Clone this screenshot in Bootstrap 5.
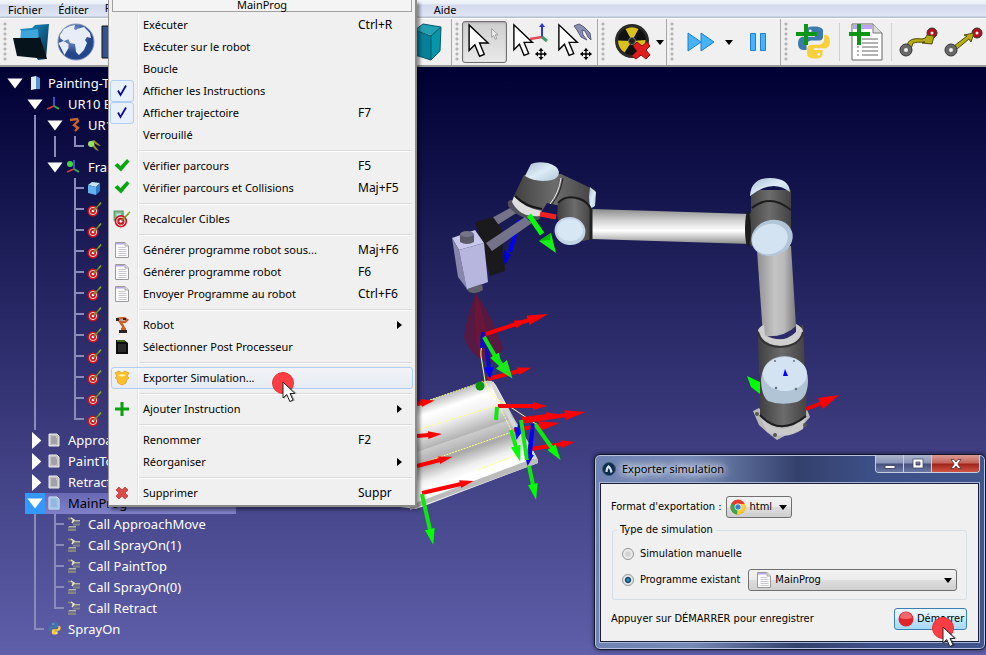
<!DOCTYPE html>
<html lang="fr">
<head>
<meta charset="utf-8">
<meta name="viewport" content="width=device-width, initial-scale=1">
<title>Exporter simulation</title>
<link href="https://cdn.jsdelivr.net/npm/bootstrap@5.3.0/dist/css/bootstrap.min.css" rel="stylesheet">
<style>
body{font-family:"Noto Sans","Open Sans",sans-serif;font-size:11px;line-height:16px;color:#000;background:#5c5ca6;overflow:hidden}
button{color:inherit}
.menubar{height:18px;background:linear-gradient(#f3f6fb 0,#e9eef8 4px,#d4daec 5px,#dfe5f4 16px,#b8bfd0 17px)}
.menubar button,.tool,.ctx-item,.wbtn{background:none;border:0;padding:0}
.menubar button{padding:0 8px;line-height:15px}
.prog-slot{width:329px}
.tools{height:49px;background:#f0f0f0;border-top:1px solid #fff;border-bottom:2px solid #9a9a96}
.tools>*{flex:none}
.tgroup{border-right:1px solid #a8a8a8}
.grip{width:10px;height:40px;flex:none;background:radial-gradient(circle at 2px 2px,#b4b4b4 1px,transparent 2px) 3px 0/5px 5px repeat-y}
.tool{width:45px;height:42px;flex:none}
.tool.wide{width:58px;padding-left:4px}
.tool.on{border:1px solid #6e6e6e;border-radius:3px;background:linear-gradient(#cfcfcf,#e8e8e8);box-shadow:inset 0 1px 2px #8888}
.first-tools{width:452px}
.first-tools .grip{width:8px}
.tsep{width:1px;height:38px;margin:0 3px;background:#d0d0d0}
.stage{background:linear-gradient(#000034,#5f5faa)}
.scene{left:0;top:0}
.tree{width:236px;padding:6px 0 10px 5px;font-size:13px;line-height:21px;color:#fff}
.trow{height:21px;white-space:nowrap}
.cell{width:20px;height:21px;flex:none}
.cell svg{display:block;margin:2px auto 0 1px}
.gv,.gt{background:linear-gradient(#8b8bbb,#8b8bbb) 9px 0/2px 21px no-repeat}
.gt{background:linear-gradient(#8b8bbb,#8b8bbb) 9px 0/2px 21px no-repeat,linear-gradient(#8b8bbb,#8b8bbb) 9px 9px/10px 2px no-repeat}
.ge{background:linear-gradient(#8b8bbb,#8b8bbb) 9px 0/2px 11px no-repeat,linear-gradient(#8b8bbb,#8b8bbb) 9px 9px/10px 2px no-repeat}
.dn,.rt{background:#fff;clip-path:polygon(12% 26%,88% 26%,50% 74%)}
.rt{clip-path:polygon(35% 10%,82% 50%,35% 90%)}
.tlabel{padding-left:3px}
.trow.sel .hot{background:#39f}
.trow.sel .fill{background:linear-gradient(#6868b4,#8080c8);color:#000}
.ctx{left:108px;top:0;width:309px;z-index:5;background:#f0f0f0;border:1px solid #979797;border-top:0;border-right:2px solid #8a8a8a;border-bottom:2px solid #8a8a8a;padding:0 2px 1px;box-shadow:3px 3px 3px #0006}
.ctx-title{height:12px;margin:0 1px 2px;border:1px solid #a0a0a0;border-top:0;line-height:10px;background:#f4f4f4}
.ctx-list{background:linear-gradient(90deg,#e2e3e3 50%,#fff 50%) 26px 0/2px 100% no-repeat}
.ctx-item{height:22px;width:100%;line-height:20px;border:1px solid transparent;border-radius:3px}
.ctx-item.hot{border-color:#aecff7;background:linear-gradient(#f2f5fa8a,#dfe9f68a)}
.ico{width:24px;flex:none;margin-left:-2px}
.ico svg,.tool svg,.wbtn svg{display:block;margin:auto}
.ico.chk{height:22px;background:#e8f0fb;border:1px solid #b0cdf4;border-radius:3px}
.ico.chk svg{margin-top:2px}
.txt{padding-left:9px}
.key{width:54px;flex:none;font-size:12px}
.sub{width:0;height:0;border:4px solid transparent;border-left:5px solid #000;border-right:0;margin-right:10px}
.ctx-sep{height:2px;margin:4px 1px 3px 28px;border-top:1px solid #dadada;border-bottom:1px solid #fff}
.pointer{pointer-events:none}
.p-menu{left:270px;top:371px;z-index:8}
.p-dlg{right:25px;bottom:-1px;z-index:8}
.win{right:0;bottom:5px;width:392px;z-index:4;border:1px solid #15152c;border-radius:6px;background:linear-gradient(90deg,#6f83b2 0,#7589b5 25%,#33406c 52%,#3c4f86 70%,#41558d 100%);box-shadow:inset 0 0 0 1px #b8c4e0,0 0 4px #0009;padding:0 6px 7px 5px}
.wtitle{height:28px}
.wtitle .cap-t{text-shadow:0 0 6px #fff,0 0 10px #fff,0 0 12px #fff}
.wtitle .logo{margin:0 6px 0 2px}
.wbtns{border:1px solid #c5cfe4;border-top:0;border-radius:0 0 4px 4px;margin-right:-1px;overflow:hidden;align-self:flex-start}
.wbtn{width:28px;height:17px;background:linear-gradient(#a9b3cd 0,#8995b6 48%,#45517b 52%,#6a78a3);border-right:1px solid #c5cfe4}
.wbtn.close-w{width:47px;border:0;background:linear-gradient(#d99a92 0,#c5655a 48%,#a02318 52%,#cf5545)}
.wbody{background:#f0f0f0;border:1px solid #1b1f3a;outline:1px solid #aab6d6;padding:12px 11px 11px 10px;font-family:"DejaVu Sans Condensed","Noto Sans",sans-serif;font-size:11px;line-height:14px}
.combo{height:22px;border:1px solid #707070;border-radius:3px;background:linear-gradient(#f2f2f2 0,#ebebeb 48%,#dddddd 52%,#cfcfcf);padding:0 3px}
.combo select{appearance:none;border:0;background:none;padding:0 14px 0 3px;font:inherit;color:#000;outline:0;flex:1;min-width:0}
.combo .car,.car{width:0;height:0;border:4px solid transparent;border-top:5px solid #000;border-bottom:0;flex:none}
.combo .car{margin-left:-13px;margin-right:1px;pointer-events:none}
.fmt{width:66px}
.fmt-l{margin-right:5px}
.box{border:1px solid #d5dfe5;border-radius:3px;padding:2px 9px 8px;margin:5px 0 0 1px}
.box legend{font-size:11px;line-height:14px;margin:0;padding:0 3px;float:none;width:auto;margin-left:-5px}
.rad{appearance:none;width:12px;height:12px;border:1px solid #8e8f8f;border-radius:50%;margin:0 6px 0 0;background:radial-gradient(#d0d0d0 20%,#f4f4f4 70%)}
.rad:checked{background:radial-gradient(circle,#3fa9d8 0,#12415f 38%,#e8eef2 52%)}
.go{height:22px;width:73px;border:1px solid #3c7fb1;border-radius:3px;background:linear-gradient(#eaf6fd 0,#d9f0fc 48%,#bee6fd 52%,#a7d9f5);padding:0 3px;font:inherit;gap:3px}
</style>
</head>
<body>
<svg width="0" height="0" class="position-absolute" aria-hidden="true"><defs>
<symbol id="tgt" viewBox="0 0 16 16"><circle cx="7" cy="10" r="5.500" fill="#c8141c"/><circle cx="7" cy="10" r="3.600" fill="none" stroke="#fff" stroke-width=".8"/><circle cx="7" cy="10" r="1.300" fill="#fff"/><path d="M7.500 9.500 14 3" stroke="#74971d" stroke-width="1.300"/><path d="m12.500 3.500 2-2.500 1 1-2 2.500z" fill="#8fb020"/></symbol>
<symbol id="doc" viewBox="0 0 16 16"><path d="M1.500.5h9.500l3.500 3.500v11.500h-13z" fill="#fcfcfc" stroke="#9a9a9a"/><path d="M2 1h8.500v1.500H2z" fill="#b9a4f4"/><path d="M11 .5v3.500h3.500" fill="#ddd" stroke="#aaa"/><path d="M4.500 5.500h7M4.500 7.500h8M4.500 9.500h8M4.500 11.500h8M4.500 13.500h8" stroke="#c9c9cd"/></symbol>
<symbol id="pdoc" viewBox="0 0 16 16"><path d="M3 2h8l2 2v10H3z" fill="#c4c4c4" stroke="#eee" /><path d="M5 5h5M5 7h6M5 9h6M5 11h6" stroke="#808080"/></symbol>
<symbol id="call" viewBox="0 0 16 16"><path d="M2 2.500h4M6 5.500h8M7 8.500h7M2 11.500h8M2 14h8" stroke="#83867f" stroke-width="2"/><path d="M6 4.500h8M3 10.500h7" stroke="#b4b8b0"/><path d="m5 2 3 2-2 3" fill="none" stroke="#ece7c0" stroke-width="1.400"/></symbol>
<symbol id="py" viewBox="0 0 32 32"><path d="M16 1c-6 0-7 2-7 4v4h8v1.500H6c-3 0-5 2.500-5 6.500s2 6 4.500 6H9v-4c0-3 2-5 5-5h7c2 0 3.500-1.500 3.500-3.500V5c0-2.500-3-4-8.500-4z" fill="#3c79ad"/><path d="M17 31c6 0 7-2 7-4v-4h-8v-1.500h10c3 0 5-2.500 5-6.500s-2-6-4-6h-1.500v4c0 3-2 5-5 5h-7c-2 0-4 1.500-4 3.500V27c0 2.500 2.500 4 7.500 4z" fill="#f9cf3c"/><circle cx="12.500" cy="5" r="1.300" fill="#fff"/><circle cx="20.500" cy="27" r="1.300" fill="#fff"/></symbol>
<symbol id="rob" viewBox="0 0 16 16"><path d="m3 2 7-1 3 2-2 2-5-.5L9 9l1 3M7 12h5" fill="none" stroke="#c8622e" stroke-width="2.600"/><path d="M5 13h8v3H5zM2 1h3v3H2zM9 1h3v2H9z" fill="#33231e"/></symbol>
<symbol id="trob" viewBox="0 0 16 16"><path d="m4 3 7-1 1 2-4 4 4 3-3 3" fill="none" stroke="#c8622e" stroke-width="2.400"/></symbol>
<symbol id="axes" viewBox="0 0 16 16"><path d="M8 11V1" stroke="#5060f0" stroke-width="1.600"/><path d="m8 10-7 3" stroke="#e0303c" stroke-width="1.800"/><path d="m8 10 5 3" stroke="#2fae5e" stroke-width="2"/></symbol>
<symbol id="ok" viewBox="0 0 16 16"><path d="m.5 7.500 3-2.500L6.500 8 13 1l2.500 2.500L7 13.500z" fill="#0aa514"/></symbol>
<symbol id="tick" viewBox="0 0 16 16"><path d="M4 7.500 6.500 12 12 2.500" fill="none" stroke="#0a0a9c" stroke-width="1.800"/></symbol>
<symbol id="cur" viewBox="0 0 28 40"><path d="M2 2v27l6-6 5 12 5-2-5-12h9z" fill="#fff" stroke="#000" stroke-width="1.500"/></symbol>
<symbol id="mv" viewBox="0 0 14 14"><path d="M7 1v12M1 7h12" stroke="#000" stroke-width="1.600"/><path d="m7 0 3 3.500H4zM7 14l-3-3.500h6zM0 7l3.500-3v6zM14 7l-3.500 3V4z"/></symbol>
<symbol id="ptr" viewBox="0 0 30 34"><circle cx="13" cy="12" r="10.500" fill="#ff3d45" stroke="#e03038"/><path d="M14 12v16l4-4 3 7 4-1.500-3.500-7H27z" fill="#0005"/><path d="M13 11v16l3.800-3.500 3 7 3.200-1.500-3-6.500h5z" fill="#fff" stroke="#222"/></symbol>
</defs></svg>
<div class="d-flex flex-column vh-100">
<nav class="menubar d-flex" aria-label="Menu principal">
<button type="button">Fichier</button><button type="button">Éditer</button><div class="prog-slot"><button type="button">Programme</button></div><button type="button">Aide</button>
</nav>
<div class="tools d-flex align-items-stretch" role="toolbar">
<div class="tgroup first-tools d-flex align-items-center"><span class="grip"></span>
<button class="tool" type="button" aria-label="Ouvrir"><svg width="38" height="38" viewBox="0 0 38 38"><defs><linearGradient id="fo" x1="0" y1="0" x2="1" y2="1"><stop stop-color="#1d9fe0"/><stop offset="1" stop-color="#04283f"/></linearGradient></defs><path d="m8 6 12-1 3-3 14-1-3 35-8 1z" fill="url(#fo)"/><path d="m9 8 17-2 1 12H8z" fill="#3ea4dc"/><path d="m1 15 24 0 3-1 7 22-30-3z" fill="#07131b"/></svg></button>
<button class="tool" type="button" aria-label="Bibliothèque"><svg width="38" height="38" viewBox="0 0 38 38"><defs><radialGradient id="gl" cx=".4" cy=".3"><stop stop-color="#94b0e0"/><stop offset="1" stop-color="#22458b"/></radialGradient></defs><circle cx="19" cy="19" r="18" fill="url(#gl)" stroke="#8195bb"/><path d="m3 12 4-6 6-3 5-1-1 4 3 2-5 3-3 5-5 2-4-3zM1.500 20l5-2 5 3 0 4-4 7zM20 6l7-2 6 6 1 5-4-1-2 3 2 3-3 7-5 5-3-3-1-8-5-1-2-5 3-4 4-2z" fill="#e6edf8"/></svg></button>
<button class="tool" type="button" aria-label="Enregistrer"><svg width="40" height="34"><path d="M1 1h38v32H1z" fill="#35518f" stroke="#111"/></svg></button>
<button class="tool ms-auto" type="button" aria-label="Vue isométrique"><svg width="36" height="38" viewBox="0 0 36 38"><path d="m4 7 8-6 18 3-8 9z" fill="#24a0b4"/><path d="M4 7l16 6v24L4 32z" fill="#058098"/><path d="m20 13 10-9-1 24-9 9z" fill="#0596a9"/><path d="m4 7 16 6 10-9M20 13v24M4 7l8-6 18 3-1 24-9 9-16-5z" fill="none" stroke="#05586c"/></svg></button></div>
<div class="tgroup d-flex align-items-center"><span class="grip"></span>
<button class="tool on" type="button" aria-label="Sélection"><svg width="36" height="38" viewBox="0 0 36 38"><use href="#cur" width="27" height="38"/><g opacity=".55"><use href="#cur" x="24" y="5" width="9" height="13"/></g></svg></button>
<button class="tool" type="button" aria-label="Déplacer repère"><svg width="36" height="38" viewBox="0 0 36 38"><path d="M30 14V2" stroke="#2638dc" stroke-width="2"/><path d="m27 4 3-4 3 4z" fill="#2638dc"/><path d="m30 14-12 2" stroke="#e24a58" stroke-width="2.500"/><path d="m30 14 5 4" stroke="#3a9c6c" stroke-width="3"/><use href="#cur" width="26" height="37"/><use href="#mv" x="23" y="25" width="12" height="12"/></svg></button>
<button class="tool" type="button" aria-label="Déplacer outil"><svg width="36" height="38" viewBox="0 0 36 38"><path d="m17 3 5-2 5 3 6 6 1 7-3-3-3-6-3-1 1 5 4 5-6-3-4-7z" fill="#8a8fb4" stroke="#54587a"/><use href="#cur" width="26" height="37"/><use href="#mv" x="23" y="25" width="12" height="12"/></svg></button></div>
<div class="tgroup d-flex align-items-center"><span class="grip"></span>
<button class="tool wide d-flex align-items-center" type="button" aria-label="Collisions"><svg width="38" height="38" viewBox="0 0 38 38"><circle cx="18" cy="18" r="17" fill="#2b2b2b"/><circle cx="18" cy="18" r="14" fill="#111"/><path d="m18 18-6.500-12a14 14 0 0 1 13 0zM18 18l13.500-1a14 14 0 0 1-6 12zM18 18 10.500 29.500a14 14 0 0 1-6.500-12z" fill="#d9c01e"/><circle cx="18" cy="18" r="3.500" fill="#222" stroke="#777"/><path d="m19 23 4-4 5 4 5-4 3 4-4 4 4 5-4 4-5-4-5 4-4-3 5-5z" fill="#de1d1d" stroke="#8f0d0d"/></svg><span class="car mx-auto"></span></button></div>
<div class="tgroup d-flex align-items-center"><span class="grip"></span>
<button class="tool wide d-flex align-items-center" type="button" aria-label="Vitesse rapide"><svg width="36" height="24" viewBox="0 0 36 24"><path d="M4 3v18l13-9zM17 3v18l13-9z" fill="#45b4fb" stroke="#2080cc"/></svg><span class="car mx-auto"></span></button>
<button class="tool" type="button" aria-label="Pause"><svg width="18" height="20"><path d="M1.500 1.500h5v17h-5zM11.500 1.500h5v17h-5z" fill="#45b4fb" stroke="#2080cc"/></svg></button></div>
<div class="d-flex align-items-center"><span class="grip"></span>
<button class="tool" type="button" aria-label="Ajouter script Python"><svg width="36" height="38" viewBox="0 0 36 38"><use href="#py" x="1" y="2" width="34" height="35"/><path d="M8 1h4v8h9v4h-9v9H8v-9H0V9h8z" fill="#0d9614"/></svg></button><span class="tsep"></span>
<button class="tool" type="button" aria-label="Ajouter programme"><svg width="36" height="38" viewBox="0 0 36 38"><path d="M4 1h21l9 9v27H4z" fill="#fff" stroke="#666"/><path d="M5 2h19v4H5z" fill="#bda4fa"/><path d="M25 1v9h9" fill="#ddd" stroke="#777"/><path d="M9 16h2M14 16h16M9 20h2M14 20h16M9 24h2M14 24h16M9 28h2M14 28h16M9 32h2M14 32h16" stroke="#999" stroke-width="1.500"/><path d="M9 1h4v8h9v4h-9v9H9v-9H1V9h8z" fill="#0d9614"/></svg></button><span class="tsep"></span>
<button class="tool" type="button" aria-label="Mouvement articulaire"><svg width="40" height="30" viewBox="0 0 40 30"><circle cx="34" cy="6" r="5" fill="#b60f1c" stroke="#333"/><circle cx="34" cy="6" r="1.500" fill="#fff"/><path d="M9 18q2-8 15-6 4 0 5-4l7 1-2 8-10-1 3-1q-9 0-12 1-1 3-2 6z" fill="#b5ac15" stroke="#514d08"/><circle cx="8" cy="23" r="6" fill="#686868" stroke="#333"/><circle cx="8" cy="23" r="2" fill="#eee"/></svg></button>
<button class="tool" type="button" aria-label="Mouvement linéaire"><svg width="40" height="30" viewBox="0 0 40 30"><circle cx="34" cy="6" r="5" fill="#b60f1c" stroke="#333"/><circle cx="34" cy="6" r="1.500" fill="#fff"/><path d="m11 19 13-10-3-1 10-2-3 9-2-3-12 10z" fill="#b5ac15" stroke="#514d08"/><circle cx="8" cy="23" r="6" fill="#686868" stroke="#333"/><circle cx="8" cy="23" r="2" fill="#eee"/></svg></button></div>
</div>
<main class="stage position-relative flex-grow-1 overflow-hidden">
<svg class="scene position-absolute w-100 h-100" viewBox="0 67 986 588" preserveAspectRatio="xMaxYMin slice" role="img" aria-label="Robot UR10">
<defs>
<linearGradient id="tube" x1="0" y1="0" x2="0" y2="1"><stop stop-color="#8c8c8c"/><stop offset=".35" stop-color="#d6d6d6"/><stop offset=".62" stop-color="#fff"/><stop offset=".85" stop-color="#bbb"/><stop offset="1" stop-color="#8b8b8b"/></linearGradient>
<linearGradient id="arm" x1="0" x2="1"><stop stop-color="#909090"/><stop offset=".45" stop-color="#c4c4c4"/><stop offset=".7" stop-color="#b9b9b9"/><stop offset="1" stop-color="#7a7a7a"/></linearGradient>
<linearGradient id="drk" x1="0" x2="1"><stop stop-color="#404040"/><stop offset=".5" stop-color="#6c6c6c"/><stop offset="1" stop-color="#424242"/></linearGradient>
<linearGradient id="cap" x1="0" y1="0" x2="1" y2="1"><stop stop-color="#a9bdcf"/><stop offset=".5" stop-color="#dcebf7"/><stop offset="1" stop-color="#b5c9db"/></linearGradient>
<linearGradient id="part" gradientUnits="userSpaceOnUse" x1="417" y1="404" x2="449" y2="496"><stop stop-color="#bbb"/><stop offset=".13" stop-color="#fff"/><stop offset=".26" stop-color="#f2f2f2"/><stop offset=".46" stop-color="#b4b4b4"/><stop offset=".47" stop-color="#cbcbcb"/><stop offset=".62" stop-color="#a9a9a9"/><stop offset=".77" stop-color="#eee"/><stop offset=".86" stop-color="#fff"/><stop offset="1" stop-color="#fff"/></linearGradient>
<marker id="hr" markerUnits="userSpaceOnUse" markerWidth="16" markerHeight="10" refX="1" refY="4" orient="auto"><path d="m0 0 14 4L0 8z" fill="red"/></marker>
<marker id="hR" markerUnits="userSpaceOnUse" markerWidth="22" markerHeight="12" refX="1" refY="5" orient="auto"><path d="m0 0 21 5L0 10z" fill="red"/></marker>
<marker id="hg" markerUnits="userSpaceOnUse" markerWidth="18" markerHeight="12" refX="1" refY="5" orient="auto"><path d="m0 0 16 5L0 10z" fill="#0f0"/></marker>
<marker id="hG" markerUnits="userSpaceOnUse" markerWidth="20" markerHeight="16" refX="1" refY="7" orient="auto"><path d="m0 0 18 7L0 14z" fill="#1fe81a"/></marker>
<marker id="hb" markerUnits="userSpaceOnUse" markerWidth="14" markerHeight="12" refX="1" refY="5" orient="auto"><path d="m0 0 12 5L0 10z" fill="#00f"/></marker>
</defs>
<!-- painted part -->
<path d="m400 410 86-29q7-3 12 8l17 31q16 26 22 38l1 5-122 46-16-2z" fill="url(#part)"/>
<path d="m410 505 127-48 1 6-128 47z" fill="#bcbcbc"/>
<path d="m493 381 20 38 25 41-8-3-20-35-18-35z" fill="#d7d7d7"/>
<!-- gripper and spray gun -->
<path d="m490 219 20-11 8 4-24 15z" fill="#74738a"/>
<ellipse cx="524" cy="210" rx="18" ry="7" transform="rotate(27 524 210)" fill="#50505e"/>
<path d="m519 220-9 32" stroke="#00f" stroke-width="4"/><path d="m504 250 7 5-6 10-2-6z" fill="#0000d0"/>
<path d="m475 222 18-5 8 11 4 43-15 5-8-30z" fill="#1a1a1c"/>
<path d="m486 243 39-26 7 6-40 28z" fill="#74738a"/>
<path d="m452 238 23-8 9 13-25 7z" fill="#c8c8ec"/><path d="m452 238 7 12 8 39-9-12z" fill="#8787ac"/><path d="m459 250 25-7 4 39-21 8z" fill="#b6b6de"/>
<path d="M460 234v8q7 4 14 0v-8z" fill="#5a5a68"/><ellipse cx="467" cy="234" rx="7" ry="3" fill="#74748a"/>
<path d="m467 289 15-5 1 6q-7 5-14 2z" fill="#60606e"/>
<path d="M476 293q-9 22-12 43 4 19 26 27 10-6 13-15-8-27-27-55z" fill="#6a1230" opacity=".68"/><path d="M476 293q-3 30 2 62l12 7q-2-36-14-69z" fill="#7d1430" opacity=".5"/>
<!-- wrist -->
<path d="m514 196 28 14-2 6q-20 2-28-14z" fill="#dedede"/>
<path d="m524 175-10 21q10 12 28 15l5-8 14 3 30 4 4-20-34-16z" fill="url(#drk)"/>
<path d="m515 196q11 11 27 13" stroke="#161616" stroke-width="2" fill="none"/>
<path d="M561 178q-2 15-11 26" stroke="#eee" fill="none"/><path d="m563 178q-2 15-11 26" stroke="#222" fill="none"/>
<path d="m590 187 6 5-1 14-5 3-1-12z" fill="url(#cap)"/>
<path d="m525 176 6-12q6-3 17-1 10 3 11 9 0 6-7 8-16 3-27-4z" fill="url(#cap)"/>
<path d="m558 204q6-8 17-6 12 1 16 10l1 31-9 2q-22-10-26-25z" fill="url(#drk)"/><path d="M558 203q8-9 22-4 8 3 11 10" stroke="#1b1b1b" stroke-width="2" fill="none"/>
<path d="m540 214 16 3" stroke="#e22" stroke-width="5"/>
<ellipse cx="570" cy="231" rx="15.500" ry="14" transform="rotate(12 570 231)" fill="#c2d5e6"/><ellipse cx="570" cy="230" rx="13" ry="11" fill="#d8e7f4"/>
<path d="m529 215 13 19" stroke="#0f0" stroke-width="5"/><path d="m539 241 12-8 5 20z" fill="#15f315"/><path d="m539 241 12-8-1 7z" fill="#0b0"/>
<!-- forearm and upper arm -->
<path d="m592 209 158 5v30l-158-5z" fill="url(#tube)"/><path d="M591 209v31" stroke="#222" stroke-width="3"/>
<path d="m757 250 34-4 5 80q-12 12-33 10z" fill="url(#arm)"/>
<path d="M758 330q24 22 45-6l2 50h-46z" fill="url(#drk)"/>
<path d="M758 330q2-4 6-5l1 10q18 10 31-3v-8q6 3 7 7-1 15-22 15-21-2-23-16z" fill="#cfcfcf"/><path d="M758 332q4 15 22 15 20-1 23-15" stroke="#333" stroke-width="2" fill="none"/>
<path d="M751 190v22q-7 14 0 34l10 2 30-20v-38z" fill="url(#drk)"/><ellipse cx="748" cy="229" rx="3" ry="18" fill="#1d1d1d"/>
<path d="M752 208q18-15 39 2" stroke="#1d1d1d" stroke-width="2" fill="none"/>
<path d="M750 196q1-18 20-18t20 14q-18-14-40 4z" fill="url(#cap)"/>
<ellipse cx="772" cy="238" rx="21" ry="18" transform="rotate(-18 772 238)" fill="#b2c6d8"/><ellipse cx="770" cy="239" rx="18" ry="15" transform="rotate(-18 770 239)" fill="#d3e3f1"/>
<!-- base -->
<path d="m753 411 6-3 5 7h36l6-8 4 10-7 8-13 8-13 7-9-7-9-8z" fill="#b9b9b9"/><path d="M760 416q21 26 46 0l-3 13q-18 12-36 3z" fill="#c9c9c9"/>
<circle cx="757" cy="414" r="2" fill="#555"/><circle cx="775" cy="435" r="2" fill="#555"/><circle cx="805" cy="425" r="2" fill="#555"/>
<path d="M760 366v50q20 22 46 1l1-45z" fill="url(#drk)"/><path d="M760 415q20 22 46 1" stroke="#1d1d1d" stroke-width="2" fill="none"/>
<path d="M761 379q2-22 24-23 22 2 23 24 0 18-11 22-16 4-29-1-7-6-7-22z" fill="#b0c4d6"/><ellipse cx="785" cy="374" rx="22" ry="17" fill="#d3e3f1"/><g fill="#66717e"><circle cx="776" cy="388" r="1.300"/><circle cx="796" cy="389" r="1.300"/><circle cx="775" cy="361" r="1"/><circle cx="794" cy="361" r="1"/></g>
<path d="m783 376 2-7 3 7z" fill="#00f"/>
<path d="m806 409 16-6" stroke="#e00" stroke-width="4"/><path d="m818 398 21-3-16 14z" fill="red"/><path d="m747 376 13 6v12l-9-7z" fill="#0f0"/>
<!-- paint path and frames -->
<g fill="none" stroke="#ffff84"><path d="M485 336q-5 12-4 20l4 25q5 14 15 20l12 7 24 16q-5 6-16 3"/><path d="m430 400 55-19M417 430l82-25 13 27-95 33M478 470l38-15" stroke-dasharray="2 1"/></g>
<g fill="none" stroke="red" stroke-width="4"><path d="m486 334 30-10" marker-end="url(#hr)"/><path d="m516 324 13-4" marker-end="url(#hR)"/><path d="m488 379 31-8" marker-end="url(#hr)"/><path d="m498 406h36" marker-end="url(#hr)"/><path d="m417 404 5-1" marker-end="url(#hr)"/><path d="m417 436 12-1" marker-end="url(#hr)"/><path d="m417 466 23-6" marker-end="url(#hr)"/><path d="m422 493 39-9" marker-end="url(#hr)"/><path d="m520 422 46-7" marker-end="url(#hR)"/><path d="m514 430 26-4" marker-end="url(#hR)"/><path d="m522 419 25-3" marker-end="url(#hr)"/><path d="m531 449 31-5" marker-end="url(#hr)"/></g>
<g fill="none" stroke="#0b0bc8" stroke-width="4"><path d="m482 348 1-16"/><path d="m486 342 3 26" marker-end="url(#hb)"/><path d="m533 424-4 31" marker-end="url(#hb)"/><path d="m521 421-2 8" marker-end="url(#hb)"/></g>
<g fill="none" stroke="#0fe80f" stroke-width="4"><path d="m484 337 11 19" marker-end="url(#hg)"/><path d="m495 356 7 9" marker-end="url(#hG)"/><path d="m422 494 8 36" marker-end="url(#hg)"/><path d="m497 407-1 13"/><path d="m511 430 5 17" marker-end="url(#hg)"/><path d="m521 420 6 40"/><path d="m529 466 4 19" marker-end="url(#hg)"/><path d="m535 424 17 24" marker-end="url(#hg)"/></g>
<circle cx="480" cy="386" r="4.500" fill="#0b960b"/><path d="m533 424-3 35" stroke="#00f" stroke-width="3"/>
</svg>
<div class="tree position-relative">
<div class="trow d-flex"><span class="cell dn"></span><span class="cell"><svg width="16" height="16"><path d="m5 2 5-1v13l-5 1z" fill="#e3ecf3"/><path d="m10 1 4 2v11h-4z" fill="#4f94cf"/></svg></span><span class="tlabel">Painting-Tur</span></div>
<div class="trow d-flex"><span class="cell"></span><span class="cell dn"></span><span class="cell"><svg width="16" height="16"><use href="#axes"/></svg></span><span class="tlabel">UR10 B</span></div>
<div class="trow d-flex"><span class="cell"></span><span class="cell gv"></span><span class="cell dn"></span><span class="cell"><svg width="16" height="16"><use href="#trob"/></svg></span><span class="tlabel">UR10</span></div>
<div class="trow d-flex"><span class="cell"></span><span class="cell gv"></span><span class="cell gv"></span><span class="cell ge"></span><span class="cell"><svg width="16" height="16"><path d="m3 4 5-2 7 6-3-.5L8 5l1 3 4 5-3-1-5-5z" fill="#95922a"/><circle cx="5" cy="6" r="3" fill="#9be06e"/></svg></span></div>
<div class="trow d-flex"><span class="cell"></span><span class="cell gv"></span><span class="cell dn"></span><span class="cell"><svg width="16" height="16"><use href="#axes"/><circle cx="4" cy="5" r="3" fill="#46d63a"/></svg></span><span class="tlabel">Fram</span></div>
<div class="trow d-flex"><span class="cell"></span><span class="cell gv"></span><span class="cell"></span><span class="cell gt"></span><span class="cell"><svg width="16" height="16"><path d="m2 5 4-3 8 1-4 4z" fill="#c4e4fa"/><path d="m2 5 8 2v8l-8-2z" fill="#63b2ee"/><path d="m10 7 4-4v8l-4 4z" fill="#2b7cc8"/></svg></span></div>
<div class="trow d-flex"><span class="cell"></span><span class="cell gv"></span><span class="cell"></span><span class="cell gt"></span><span class="cell"><svg width="16" height="16"><use href="#tgt"/></svg></span></div>
<div class="trow d-flex"><span class="cell"></span><span class="cell gv"></span><span class="cell"></span><span class="cell gt"></span><span class="cell"><svg width="16" height="16"><use href="#tgt"/></svg></span></div>
<div class="trow d-flex"><span class="cell"></span><span class="cell gv"></span><span class="cell"></span><span class="cell gt"></span><span class="cell"><svg width="16" height="16"><use href="#tgt"/></svg></span></div>
<div class="trow d-flex"><span class="cell"></span><span class="cell gv"></span><span class="cell"></span><span class="cell gt"></span><span class="cell"><svg width="16" height="16"><use href="#tgt"/></svg></span></div>
<div class="trow d-flex"><span class="cell"></span><span class="cell gv"></span><span class="cell"></span><span class="cell gt"></span><span class="cell"><svg width="16" height="16"><use href="#tgt"/></svg></span></div>
<div class="trow d-flex"><span class="cell"></span><span class="cell gv"></span><span class="cell"></span><span class="cell gt"></span><span class="cell"><svg width="16" height="16"><use href="#tgt"/></svg></span></div>
<div class="trow d-flex"><span class="cell"></span><span class="cell gv"></span><span class="cell"></span><span class="cell gt"></span><span class="cell"><svg width="16" height="16"><use href="#tgt"/></svg></span></div>
<div class="trow d-flex"><span class="cell"></span><span class="cell gv"></span><span class="cell"></span><span class="cell gt"></span><span class="cell"><svg width="16" height="16"><use href="#tgt"/></svg></span></div>
<div class="trow d-flex"><span class="cell"></span><span class="cell gv"></span><span class="cell"></span><span class="cell gt"></span><span class="cell"><svg width="16" height="16"><use href="#tgt"/></svg></span></div>
<div class="trow d-flex"><span class="cell"></span><span class="cell gv"></span><span class="cell"></span><span class="cell gt"></span><span class="cell"><svg width="16" height="16"><use href="#tgt"/></svg></span></div>
<div class="trow d-flex"><span class="cell"></span><span class="cell gv"></span><span class="cell"></span><span class="cell ge"></span><span class="cell"><svg width="16" height="16"><use href="#tgt"/></svg></span></div>
<div class="trow d-flex"><span class="cell"></span><span class="cell rt"></span><span class="cell"><svg width="16" height="16"><use href="#pdoc"/></svg></span><span class="tlabel">Approa</span></div>
<div class="trow d-flex"><span class="cell"></span><span class="cell rt"></span><span class="cell"><svg width="16" height="16"><use href="#pdoc"/></svg></span><span class="tlabel">PaintTo</span></div>
<div class="trow d-flex"><span class="cell"></span><span class="cell rt"></span><span class="cell"><svg width="16" height="16"><use href="#pdoc"/></svg></span><span class="tlabel">Retract</span></div>
<div class="trow sel d-flex"><span class="cell"></span><span class="cell hot"><span class="cell dn d-block"></span></span><span class="fill d-flex flex-grow-1"><span class="cell"><svg width="16" height="16"><use href="#pdoc"/><path d="M3 2h8l2 2v10H3z" fill="#8ac6ff99"/></svg></span><span class="tlabel">MainProg</span></span></div>
<div class="trow d-flex"><span class="cell"></span><span class="cell gv"></span><span class="cell gt"></span><span class="cell"><svg width="16" height="16"><use href="#call"/></svg></span><span class="tlabel">Call ApproachMove</span></div>
<div class="trow d-flex"><span class="cell"></span><span class="cell gv"></span><span class="cell gt"></span><span class="cell"><svg width="16" height="16"><use href="#call"/></svg></span><span class="tlabel">Call SprayOn(1)</span></div>
<div class="trow d-flex"><span class="cell"></span><span class="cell gv"></span><span class="cell gt"></span><span class="cell"><svg width="16" height="16"><use href="#call"/></svg></span><span class="tlabel">Call PaintTop</span></div>
<div class="trow d-flex"><span class="cell"></span><span class="cell gv"></span><span class="cell gt"></span><span class="cell"><svg width="16" height="16"><use href="#call"/></svg></span><span class="tlabel">Call SprayOn(0)</span></div>
<div class="trow d-flex"><span class="cell"></span><span class="cell gv"></span><span class="cell ge"></span><span class="cell"><svg width="16" height="16"><use href="#call"/></svg></span><span class="tlabel">Call Retract</span></div>
<div class="trow d-flex"><span class="cell"></span><span class="cell ge"></span><span class="cell"><svg width="16" height="16"><use href="#py" x="2" y="1" width="13" height="13"/></svg></span><span class="tlabel">SprayOn</span></div>
</div>
</main>
</div>
<div class="ctx position-absolute" role="menu">
<div class="ctx-title text-center">MainProg</div>
<div class="ctx-list">
<button class="ctx-item d-flex align-items-center text-start" type="button"><span class="ico"></span><span class="txt flex-grow-1">Exécuter</span><span class="key">Ctrl+R</span></button>
<button class="ctx-item d-flex align-items-center text-start" type="button"><span class="ico"></span><span class="txt">Exécuter sur le robot</span></button>
<button class="ctx-item d-flex align-items-center text-start" type="button"><span class="ico"></span><span class="txt">Boucle</span></button>
<button class="ctx-item d-flex align-items-center text-start" type="button"><span class="ico chk"><svg width="16" height="16"><use href="#tick"/></svg></span><span class="txt">Afficher les Instructions</span></button>
<button class="ctx-item d-flex align-items-center text-start" type="button"><span class="ico chk"><svg width="16" height="16"><use href="#tick"/></svg></span><span class="txt flex-grow-1">Afficher trajectoire</span><span class="key">F7</span></button>
<button class="ctx-item d-flex align-items-center text-start" type="button"><span class="ico"></span><span class="txt">Verrouillé</span></button>
<div class="ctx-sep"></div>
<button class="ctx-item d-flex align-items-center text-start" type="button"><span class="ico"><svg width="16" height="16"><use href="#ok"/></svg></span><span class="txt flex-grow-1">Vérifier parcours</span><span class="key">F5</span></button>
<button class="ctx-item d-flex align-items-center text-start" type="button"><span class="ico"><svg width="16" height="16"><use href="#ok"/></svg></span><span class="txt flex-grow-1">Vérifier parcours et Collisions</span><span class="key">Maj+F5</span></button>
<div class="ctx-sep"></div>
<button class="ctx-item d-flex align-items-center text-start" type="button"><span class="ico"><svg width="18" height="18" viewBox="0 0 16 16"><path d="M1 1h8v8H1z" fill="#7ec283" stroke="#5b9a72"/><path d="M3 3h4v3H3z" fill="#b7e4e6"/><use href="#tgt"/></svg></span><span class="txt">Recalculer Cibles</span></button>
<div class="ctx-sep"></div>
<button class="ctx-item d-flex align-items-center text-start" type="button"><span class="ico"><svg width="16" height="16"><use href="#doc"/></svg></span><span class="txt flex-grow-1">Générer programme robot sous...</span><span class="key">Maj+F6</span></button>
<button class="ctx-item d-flex align-items-center text-start" type="button"><span class="ico"><svg width="16" height="16"><use href="#doc"/></svg></span><span class="txt flex-grow-1">Générer programme robot</span><span class="key">F6</span></button>
<button class="ctx-item d-flex align-items-center text-start" type="button"><span class="ico"><svg width="16" height="16"><use href="#doc"/></svg></span><span class="txt flex-grow-1">Envoyer Programme au robot</span><span class="key">Ctrl+F6</span></button>
<div class="ctx-sep"></div>
<button class="ctx-item d-flex align-items-center text-start" type="button"><span class="ico"><svg width="16" height="16"><use href="#rob"/></svg></span><span class="txt flex-grow-1">Robot</span><span class="sub"></span></button>
<button class="ctx-item d-flex align-items-center text-start" type="button"><span class="ico"><svg width="16" height="16"><path d="M2 1h8l4 3v11H2z" fill="#0d0d0d"/><path d="M3 1h7l1 2H3z" fill="#3f6b16"/><path d="M4 6h8M4 8h8M4 10h8M4 12h8" stroke="#444"/></svg></span><span class="txt">Sélectionner Post Processeur</span></button>
<div class="ctx-sep"></div>
<button class="ctx-item hot d-flex align-items-center text-start" type="button"><span class="ico"><svg width="16" height="16"><path d="m1 3 4-2 3 2 3-2 4 2-2 3 2 2-2 1-1 4-4 2-4-2-1-4-2-1 2-2z" fill="#fbc02c" stroke="#d89a14" stroke-width=".7"/><path d="m4 5 4 2 4-2-4-1z" fill="#fff3a8"/></svg></span><span class="txt">Exporter Simulation...</span></button>
<div class="ctx-sep"></div>
<button class="ctx-item d-flex align-items-center text-start" type="button"><span class="ico"><svg width="16" height="16"><path d="M6.500 1h3v5.500H15v3H9.500V15h-3V9.500H1v-3h5.500z" fill="#0ba012"/></svg></span><span class="txt flex-grow-1">Ajouter Instruction</span><span class="sub"></span></button>
<div class="ctx-sep"></div>
<button class="ctx-item d-flex align-items-center text-start" type="button"><span class="ico"></span><span class="txt flex-grow-1">Renommer</span><span class="key">F2</span></button>
<button class="ctx-item d-flex align-items-center text-start" type="button"><span class="ico"></span><span class="txt flex-grow-1">Réorganiser</span><span class="sub"></span></button>
<div class="ctx-sep"></div>
<button class="ctx-item d-flex align-items-center text-start" type="button"><span class="ico"><svg width="16" height="16"><path d="m2 5 3-3 3 3 3-3 3 3-3 3 3 3-3 3-3-3-3 3-3-3 3-3z" fill="#dc4a4a" stroke="#c03a3a" stroke-width=".8"/></svg></span><span class="txt flex-grow-1">Supprimer</span><span class="key">Suppr</span></button>
</div>
</div>
<svg class="pointer p-menu position-absolute" width="30" height="34"><use href="#ptr"/></svg>
<section class="win position-absolute" role="dialog" aria-labelledby="wt">
<div class="wtitle d-flex align-items-center"><svg width="14" height="14" class="logo"><circle cx="7" cy="7" r="6.500" fill="#0e2c4c" stroke="#3c5876"/><path d="M3.500 10q0-5 3-7 3 2 4 7l-2 1q0-3-2-5-1 2-1 4z" fill="#d8e8f2"/></svg><span id="wt" class="cap-t me-auto">Exporter simulation</span>
<div class="wbtns d-flex"><button class="wbtn" type="button" aria-label="Réduire"><svg width="12" height="12"><path d="M1 7.500h10v3H1z" fill="#fff" stroke="#444c66"/></svg></button><button class="wbtn" type="button" aria-label="Agrandir"><svg width="12" height="12"><path d="M1 1h10v9H1zM4 4v3h4V4z" fill="#fff" fill-rule="evenodd" stroke="#444c66" stroke-width=".8"/></svg></button><button class="wbtn close-w" type="button" aria-label="Fermer"><svg width="12" height="12"><path d="M1 1.500h3l2 2.500 2-2.500h3L7.800 6l3.200 4.500H8L6 8l-2 2.500H1L4.200 6z" fill="#fff" stroke="#5a2a2a" stroke-width=".8"/></svg></button></div></div>
<form class="wbody">
<div class="d-flex align-items-center"><label for="fmt" class="fmt-l">Format d'exportation :</label><div class="combo fmt d-flex align-items-center"><svg width="16" height="16"><circle cx="8" cy="8" r="7.500" fill="#e33b2e"/><path d="M8 8 1.500 4.200A7.500 7.500 0 0 0 7 15.400L11 9z" fill="#3fa64a"/><path d="M8 8 7 15.400A7.500 7.500 0 0 0 14.900 5H8z" fill="#fbcf2f"/><circle cx="8" cy="8" r="3.400" fill="#fff"/><circle cx="8" cy="8" r="2.700" fill="#3f7fdc"/></svg><select id="fmt"><option>html</option></select><span class="car"></span></div></div>
<fieldset class="box"><legend>Type de simulation</legend>
<div class="d-flex align-items-center mt-1 mb-1 py-1"><input class="rad" type="radio" name="sim" id="s1"><label for="s1">Simulation manuelle</label></div>
<div class="d-flex align-items-center"><input class="rad" type="radio" name="sim" id="s2" checked><label for="s2" class="me-2">Programme existant</label><div class="combo d-flex align-items-center flex-grow-1"><svg width="16" height="16" class="ms-1"><use href="#doc"/></svg><select aria-label="Programme"><option>MainProg</option></select><span class="car"></span></div></div>
</fieldset>
<div class="d-flex align-items-center justify-content-between mt-2"><span>Appuyer sur DÉMARRER pour enregistrer</span><button class="go d-flex align-items-center" type="button"><svg width="16" height="16" class="flex-shrink-0"><circle cx="8" cy="8" r="7.500" fill="#e0242a"/><path d="M2 7a6 6 0 0 1 12 0q-6 2-12 0z" fill="#f2686c"/></svg>Démarrer</button></div>
</form>
<svg class="pointer p-dlg position-absolute" width="30" height="34"><use href="#ptr"/></svg>
</section>
<script src="https://cdn.jsdelivr.net/npm/bootstrap@5.3.0/dist/js/bootstrap.bundle.min.js"></script>
</body>
</html>
